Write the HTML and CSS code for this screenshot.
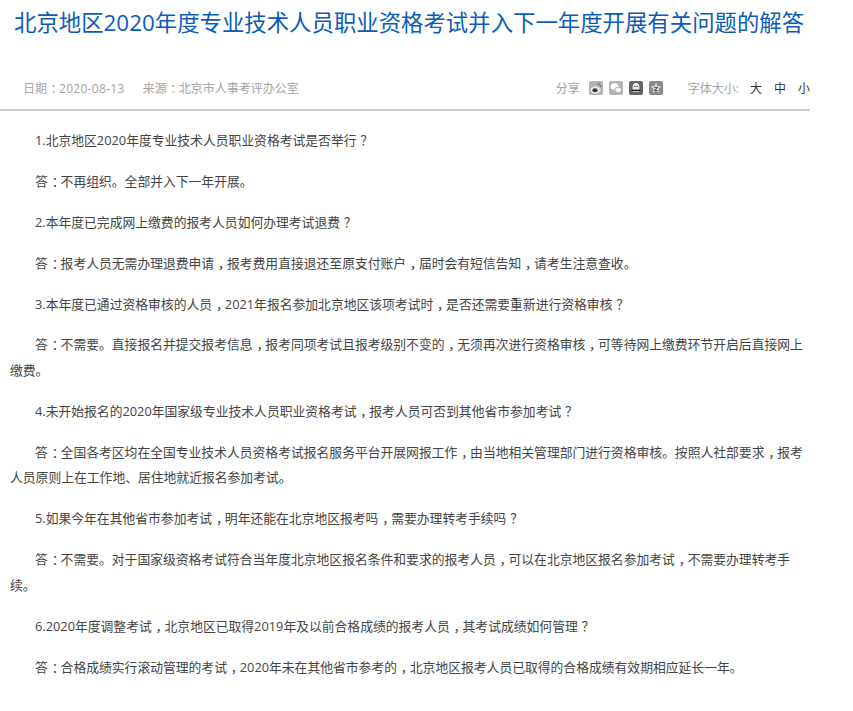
FILE: index.html
```html
<!DOCTYPE html>
<html lang="zh-CN">
<head>
<meta charset="utf-8">
<title>解答</title>
<link rel="stylesheet" href="styles.css">
</head>
<body>
<div class="page">
<h1 class="title">北京地区2020年度专业技术人员职业资格考试并入下一年度开展有关问题的解答</h1>
<div class="meta">
  <div class="info"><span>日期<span class="p">：</span><span class="date">2020-08-13</span></span><span>来源<span class="p">：</span>北京市人事考评办公室</span></div>
  <div class="tools">
    <span class="label">分享</span>
    <span class="icons">
      <svg class="ic" viewBox="0 0 14 14"><rect width="14" height="14" rx="2" fill="#b4b4b4"/><ellipse cx="6.5" cy="9" rx="5" ry="3.4" fill="#f2f2f2"/><ellipse cx="6" cy="9.2" rx="2.6" ry="2" fill="#333"/><path d="M8.5 3c2.2-.3 3.6 1 3.4 3.2" stroke="#666" fill="none"/></svg>
      <svg class="ic" viewBox="0 0 14 14"><rect width="14" height="14" rx="2" fill="#b4b4b4"/><ellipse cx="5.5" cy="5.5" rx="4" ry="3.2" fill="#fff"/><ellipse cx="9.2" cy="9" rx="3.4" ry="2.8" fill="#f4f4f4" stroke="#999" stroke-width=".6"/></svg>
      <svg class="ic" viewBox="0 0 14 14"><rect width="14" height="14" rx="2" fill="#666"/><path d="M3.6 11V6a3.4 4 0 0 1 6.8 0v5z" fill="#eee"/><circle cx="5.8" cy="5.4" r=".7" fill="#333"/><circle cx="8.2" cy="5.4" r=".7" fill="#333"/><rect x="2.6" y="8.6" width="8.8" height="1.6" fill="#222"/></svg>
      <svg class="ic" viewBox="0 0 14 14"><rect width="14" height="14" rx="2" fill="#8a8a8a"/><path d="M7 1.5l1.6 3.6 3.9.4-2.9 2.6.8 3.9L7 10l-3.4 2 .8-3.9-2.9-2.6 3.9-.4z" fill="#d8d8d8"/><path d="M5.2 6.4h3.6L5.2 9.4h3.6" stroke="#555" fill="none"/></svg>
    </span>
    <span class="label size">字体大小:</span>
    <span class="sizes"><span>大</span><span>中</span><span>小</span></span>
  </div>
</div>
<div class="content">
<p>1.北京地区2020年度专业技术人员职业资格考试是否举行<span class="p">？</span></p>
<p>答<span class="p">：</span>不再组织。全部并入下一年开展。</p>
<p>2.本年度已完成网上缴费的报考人员如何办理考试退费<span class="p">？</span></p>
<p>答<span class="p">：</span>报考人员无需办理退费申请<span class="p">，</span>报考费用直接退还至原支付账户<span class="p">，</span>届时会有短信告知<span class="p">，</span>请考生注意查收。</p>
<p>3.本年度已通过资格审核的人员<span class="p">，</span>2021年报名参加北京地区该项考试时<span class="p">，</span>是否还需要重新进行资格审核<span class="p">？</span></p>
<p>答<span class="p">：</span>不需要。直接报名并提交报考信息<span class="p">，</span>报考同项考试且报考级别不变的<span class="p">，</span>无须再次进行资格审核<span class="p">，</span>可等待网上缴费环节开启后直接网上缴费。</p>
<p>4.未开始报名的2020年国家级专业技术人员职业资格考试<span class="p">，</span>报考人员可否到其他省市参加考试<span class="p">？</span></p>
<p>答<span class="p">：</span>全国各考区均在全国专业技术人员资格考试报名服务平台开展网报工作<span class="p">，</span>由当地相关管理部门进行资格审核。按照人社部要求<span class="p">，</span>报考人员原则上在工作地、居住地就近报名参加考试。</p>
<p>5.如果今年在其他省市参加考试<span class="p">，</span>明年还能在北京地区报考吗<span class="p">，</span>需要办理转考手续吗<span class="p">？</span></p>
<p>答<span class="p">：</span>不需要。对于国家级资格考试符合当年度北京地区报名条件和要求的报考人员<span class="p">，</span>可以在北京地区报名参加考试<span class="p">，</span>不需要办理转考手续。</p>
<p>6.2020年度调整考试<span class="p">，</span>北京地区已取得2019年及以前合格成绩的报考人员<span class="p">，</span>其考试成绩如何管理<span class="p">？</span></p>
<p>答<span class="p">：</span>合格成绩实行滚动管理的考试<span class="p">，</span>2020年未在其他省市参考的<span class="p">，</span>北京地区报考人员已取得的合格成绩有效期相应延长一年。</p>
</div>
</div>
</body>
</html>
```
FILE: styles.css
```css
html, body { margin: 0; padding: 0; background: #fff; }
body { font-family: "Open Sans", "Noto Sans CJK SC", sans-serif; color: #444; }
.page { width: 810px; padding-top: 9px; }
.title { margin: 0; padding-left: 14px; font-size: 22.4px; line-height: 28px; font-weight: 400; color: #0b5cb8; white-space: nowrap; }
.meta { margin-top: 30px; height: 42px; padding: 0 0 0 23px; display: flex; justify-content: space-between; align-items: center; border-bottom: 2px solid #cfcfcf; font-size: 12px; color: #a3a3a3; }
.info { display: flex; gap: 18px; }
.date { letter-spacing: .3px; }
.p { padding-left: .3em; letter-spacing: -.3em; }
.tools { display: flex; align-items: center; }
.icons { display: flex; gap: 6px; margin-left: 9px; }
.ic { width: 14px; height: 14px; display: block; }
.size { margin-left: 25px; }
.sizes { display: flex; gap: 12px; margin-left: 11px; color: #333; }
.content { padding: 17px 0 0 10px; font-size: 12.8px; line-height: 25.6px; }
.content p { margin: 0 0 15.3px; text-indent: 25px; }
```
